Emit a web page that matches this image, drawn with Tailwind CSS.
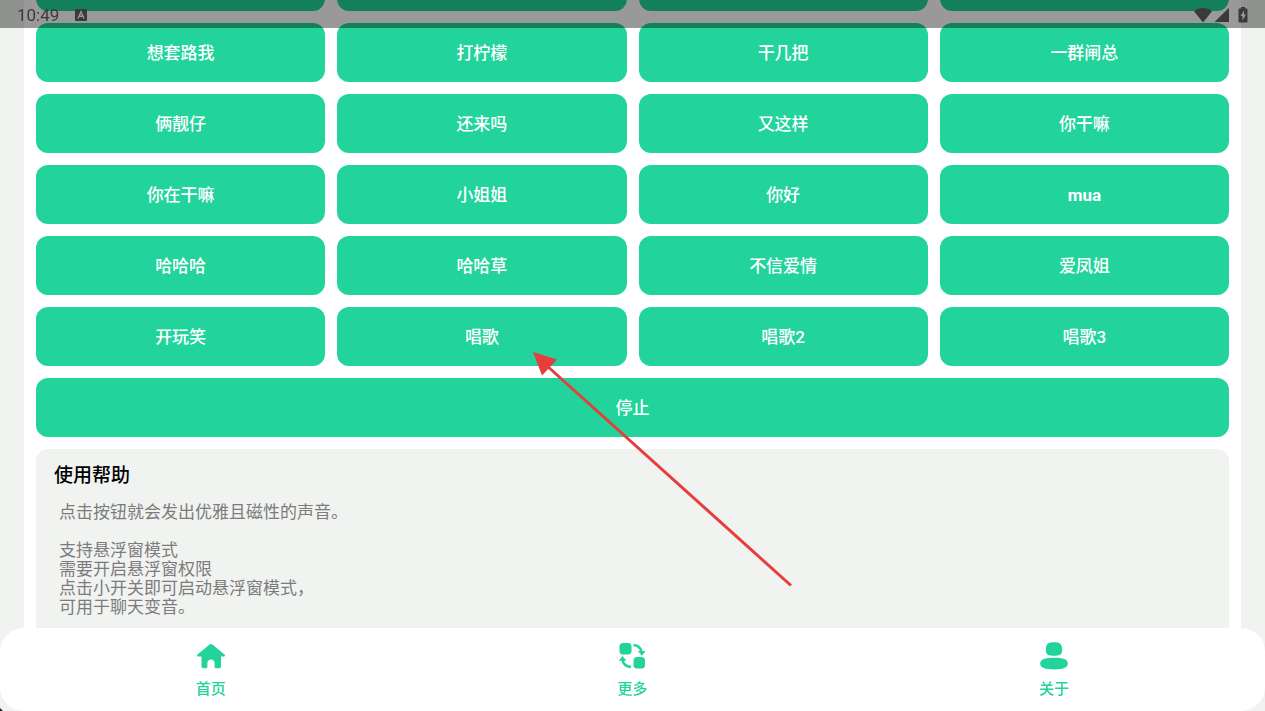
<!DOCTYPE html>
<html lang="zh-CN">
  <head>
    <meta charset="utf-8" />
    <title>首页</title>
    <meta name="viewport" content="width=device-width, initial-scale=1" />
    <script src="https://cdn.jsdelivr.net/npm/@tailwindcss/browser@4"></script>
  </head>

  <body class="h-screen overflow-hidden bg-[#f1f3f1] font-[Roboto,'Noto_Sans_CJK_SC',sans-serif]">

    <!-- status bar -->
    <header class="fixed inset-x-0 top-0 z-20 flex h-7 items-center bg-black/40 pt-0.5 pl-[17px] pr-[15px] text-[#3a3a3a]">
      <span class="text-[17px] leading-6">10:49</span>
      <svg class="ml-4 h-3 w-3" viewBox="0 0 12 12" aria-hidden="true">
        <rect width="12" height="12" rx="1" fill="#3a3a3a" />
        <path d="M3 9.500 6 2.800 9 9.500M4.200 7.300h3.600" fill="none" stroke="#999" stroke-width="1.400" />
      </svg>
      <div class="ml-auto flex items-center">
        <svg class="h-4 w-[18px]" viewBox="0 0 18 16" fill="#3a3a3a" aria-hidden="true">
          <path d="M0 4.200C2.400 2 5.500 1 9 1s6.600 1 9 3.200L9 15.500z" />
        </svg>
        <svg class="ml-0.5 h-4 w-[15px]" viewBox="0 0 15 16" fill="#3a3a3a" aria-hidden="true">
          <path d="M15 .8V15H.5z" />
        </svg>
        <svg class="ml-2 h-4 w-[13px]" viewBox="0 0 13 16" aria-hidden="true">
          <path d="M4 0h4v1.500h1.500a1 1 0 0 1 1 1V14.500a1 1 0 0 1-1 1h-7a1 1 0 0 1-1-1V2.500a1 1 0 0 1 1-1H4z" fill="#3a3a3a" />
          <path d="M7 3.500 3.500 9h2v4.500L9 7.500H7z" fill="#999" />
        </svg>
      </div>
    </header>

    <main class="mx-6 h-full overflow-hidden bg-white px-3">
      <div class="-mt-12 grid grid-cols-4 gap-3 text-[17px] font-medium text-white">
        <!-- row scrolled under the status bar -->
        <button class="h-[59px] rounded-xl bg-[#22d49b] pt-[3px]"></button>
        <button class="h-[59px] rounded-xl bg-[#22d49b] pt-[3px]"></button>
        <button class="h-[59px] rounded-xl bg-[#22d49b] pt-[3px]"></button>
        <button class="h-[59px] rounded-xl bg-[#22d49b] pt-[3px]"></button>

        <button class="h-[59px] rounded-xl bg-[#22d49b] pt-[3px]">想套路我</button>
        <button class="h-[59px] rounded-xl bg-[#22d49b] pt-[3px]">打柠檬</button>
        <button class="h-[59px] rounded-xl bg-[#22d49b] pt-[3px]">干几把</button>
        <button class="h-[59px] rounded-xl bg-[#22d49b] pt-[3px]">一群闸总</button>

        <button class="h-[59px] rounded-xl bg-[#22d49b] pt-[3px]">俩靓仔</button>
        <button class="h-[59px] rounded-xl bg-[#22d49b] pt-[3px]">还来吗</button>
        <button class="h-[59px] rounded-xl bg-[#22d49b] pt-[3px]">又这样</button>
        <button class="h-[59px] rounded-xl bg-[#22d49b] pt-[3px]">你干嘛</button>

        <button class="h-[59px] rounded-xl bg-[#22d49b] pt-[3px]">你在干嘛</button>
        <button class="h-[59px] rounded-xl bg-[#22d49b] pt-[3px]">小姐姐</button>
        <button class="h-[59px] rounded-xl bg-[#22d49b] pt-[3px]">你好</button>
        <button class="h-[59px] rounded-xl bg-[#22d49b] pt-[3px] font-bold">mua</button>

        <button class="h-[59px] rounded-xl bg-[#22d49b] pt-[3px]">哈哈哈</button>
        <button class="h-[59px] rounded-xl bg-[#22d49b] pt-[3px]">哈哈草</button>
        <button class="h-[59px] rounded-xl bg-[#22d49b] pt-[3px]">不信爱情</button>
        <button class="h-[59px] rounded-xl bg-[#22d49b] pt-[3px]">爱凤姐</button>

        <button class="h-[59px] rounded-xl bg-[#22d49b] pt-[3px]">开玩笑</button>
        <button class="h-[59px] rounded-xl bg-[#22d49b] pt-[3px]">唱歌</button>
        <button class="h-[59px] rounded-xl bg-[#22d49b] pt-[3px]">唱歌2</button>
        <button class="h-[59px] rounded-xl bg-[#22d49b] pt-[3px]">唱歌3</button>

        <button class="col-span-4 h-[59px] rounded-xl bg-[#22d49b] pt-[3px]">停止</button>
      </div>

      <section class="mt-3 h-full rounded-xl bg-[#f1f3f1] px-[18px] pt-3.5">
        <h2 class="text-[19px] leading-[26px] font-medium text-black">使用帮助</h2>
        <p class="mt-3.5 pl-[5px] text-[17px] leading-[19px] text-[#7c7c7c]">
          点击按钮就会发出优雅且磁性的声音。<br />
          <br />
          支持悬浮窗模式<br />
          需要开启悬浮窗权限<br />
          点击小开关即可启动悬浮窗模式，<br />
          可用于聊天变音。
        </p>
      </section>
    </main>

    <!-- tab bar -->
    <nav class="fixed inset-x-0 bottom-0 z-10 grid grid-cols-3 rounded-3xl bg-white pt-3.5 pb-2.5 text-[15px] leading-[23px] font-medium text-[#22d49b]">
      <a href="#" class="flex flex-col items-center gap-2">
        <svg class="h-7 w-7" viewBox="0 0 28 28" fill="currentColor" aria-hidden="true">
          <path d="M12.600 2.500a2.200 2.200 0 0 1 2.800 0L27.500 12.600c.9.800.4 1.900-.7 1.900H24v9.700c0 1.200-.8 2-2 2h-3.200c-.7 0-1.200-.5-1.200-1.200v-4.200c0-1.900-1.500-3.300-3.600-3.300s-3.600 1.400-3.600 3.300V25c0 .7-.5 1.200-1.200 1.200H6.500c-1.200 0-2-.8-2-2v-9.700H1.200c-1.100 0-1.600-1.100-.7-1.900z" />
        </svg>
        <span>首页</span>
      </a>
      <a href="#" class="flex flex-col items-center gap-2">
        <svg class="h-7 w-7" viewBox="0 0 28 28" fill="currentColor" aria-hidden="true">
          <rect x="1.500" y="1" width="12" height="11.500" rx="3.500" />
          <rect x="15.500" y="15" width="11.500" height="11.500" rx="3.500" />
          <path d="M15.500 3c4.500.4 7.500 3 8 7.500M13 25c-4.500-.4-8-3-8.500-7.500" fill="none" stroke="currentColor" stroke-width="2.400" />
          <path d="M19.800 9h7.700L24 13.800zM.8 18.800h7.700L4.500 14z" />
        </svg>
        <span>更多</span>
      </a>
      <a href="#" class="flex flex-col items-center gap-2">
        <svg class="h-7 w-7" viewBox="0 0 28 28" fill="currentColor" aria-hidden="true">
          <path d="M5.800 7.500C5.800 2 8.500.2 14 .2s8.200 1.800 8.200 7.300-2.700 6.300-8.200 6.300-8.200-.8-8.200-6.300z" />
          <path d="M.2 21.600c0-4.500 5-5.800 13.800-5.800s13.800 1.300 13.800 5.800-5 5.800-13.800 5.800S.2 26.100.2 21.600z" />
        </svg>
        <span>关于</span>
      </a>
    </nav>

    <!-- pointer to the 唱歌 button -->
    <svg class="pointer-events-none absolute top-[352px] left-[532px] z-10 h-[236px] w-[262px]" viewBox="0 0 262 236" aria-hidden="true">
      <path d="M14 13 259 233.500" stroke="#e53e3c" stroke-width="3" />
      <path d="M1 0 25 7.500 10 23.500z" fill="#e53e3c" />
    </svg>

    <svg class="fixed bottom-0 left-0 z-20 h-1 w-1" viewBox="0 0 4 4" aria-hidden="true">
      <path d="M0 1 3 4H0z" fill="#222" />
    </svg>
  </body>
</html>
